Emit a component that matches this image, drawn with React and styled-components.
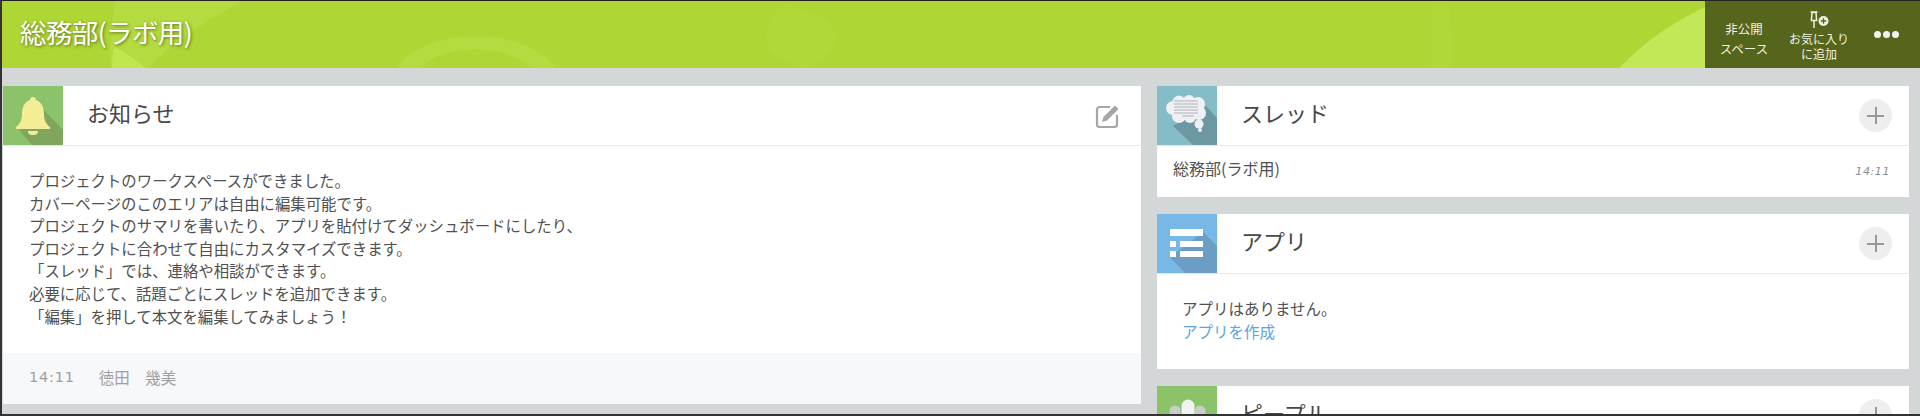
import React from "react";
import styled, { createGlobalStyle } from "styled-components";

const messageLines = [
  "プロジェクトのワークスペースができました。",
  "カバーページのこのエリアは自由に編集可能です。",
  "プロジェクトのサマリを書いたり、アプリを貼付けてダッシュボードにしたり、",
  "プロジェクトに合わせて自由にカスタマイズできます。",
  "「スレッド」では、連絡や相談ができます。",
  "必要に応じて、話題ごとにスレッドを追加できます。",
  "「編集」を押して本文を編集してみましょう！",
];

const GlobalStyle = createGlobalStyle`
  html, body {
    margin: 0;
    height: 100%;
    overflow: hidden;
    background: #d3d7d8;
  }
  body {
    font-family: "Noto Sans CJK JP", "Noto Sans", sans-serif;
    color: #444;
  }
`;

const Page = styled.div`
  height: 416px;
  box-sizing: border-box;
  border-top: 1px solid #222;
  border-left: 2px solid #333;
  border-bottom: 2px solid #333;
  overflow: hidden;
  display: flex;
  flex-direction: column;
`;

const Header = styled.header`
  position: relative;
  height: 67px;
  flex: none;
  display: flex;
  justify-content: space-between;
  background: #aed634;
  overflow: hidden;
`;

const Swirl = styled.svg`
  position: absolute;
  inset: 0;
  width: 100%;
  height: 100%;
`;

const Title = styled.h1`
  position: relative;
  margin: 0;
  padding-left: 18px;
  font-size: 26.5px;
  font-weight: 400;
  line-height: 62px;
  letter-spacing: -0.6px;
  color: #fff;
  text-shadow: 1px 1px 3px rgba(60, 70, 20, 0.7);
`;

const Actions = styled.div`
  position: relative;
  width: 215px;
  display: flex;
  background: #56651c;
  color: #eef0e0;
  text-align: center;
`;

const Action = styled.div`
  width: ${(p) => p.$width}px;
  box-sizing: border-box;
  padding-top: ${(p) => p.$top}px;
  font-size: ${(p) => p.$size}px;
  line-height: ${(p) => p.$leading}px;
  display: flex;
  flex-direction: column;
  align-items: center;
  justify-content: center;

  svg {
    margin-bottom: 3px;
  }
`;

const Dots = styled.div`
  flex: 1;
  display: flex;
  gap: 2px;
  align-items: center;
  justify-content: center;
  padding-right: 2px;

  i {
    width: 7px;
    height: 7px;
    border-radius: 50%;
    background: #f2f2f2;
  }
`;

const Main = styled.main`
  flex: 1;
  min-height: 0;
  display: flex;
  gap: 16px;
  padding: 18px 11px 0 1px;
  align-items: flex-start;
`;

const LeftColumn = styled.div`
  width: 1138px;
`;

const RightColumn = styled.div`
  flex: 1;
  display: flex;
  flex-direction: column;
  gap: 17px;
`;

const Panel = styled.section`
  background: #fff;
`;

const PanelHead = styled.div`
  height: 59px;
  display: flex;
  align-items: center;
  border-bottom: 1px solid #e4e8e9;
`;

const IconTile = styled.div`
  width: 60px;
  height: 59px;
  flex: none;
  background: ${(p) => p.$color};
  overflow: hidden;

  svg {
    display: block;
  }
`;

const PanelTitle = styled.h2`
  flex: 1;
  margin: 0;
  padding: 0 0 7px 24px;
  font-size: 22px;
  font-weight: 400;
  color: #484848;
`;

const EditButton = styled.div`
  margin-right: 19px;
  display: flex;
`;

const AddButton = styled.div`
  position: relative;
  width: 33px;
  height: 33px;
  margin-right: 17px;
  border-radius: 50%;
  background: #eeeeee;

  &::before, &::after {
    content: "";
    position: absolute;
    background: #999;
  }
  &::before {
    left: 8px;
    right: 8px;
    top: 16px;
    height: 1.5px;
  }
  &::after {
    top: 8px;
    bottom: 8px;
    left: 16px;
    width: 1.5px;
  }
`;

const MessageBody = styled.div`
  padding: 23px 26px 0;
  height: 207px;
  box-sizing: border-box;
  font-size: 15.4px;
  line-height: 22.6px;
  color: #505050;
`;

const MessageFooter = styled.div`
  height: 51px;
  box-sizing: border-box;
  padding: 0 0 4px 26px;
  display: flex;
  align-items: center;
  gap: 24px;
  background: #f6f8f9;
  color: #a0a0a0;
  font-size: 15.5px;
`;

const FooterTime = styled.span`
  font-family: "DejaVu Sans", sans-serif;
  font-size: 14.5px;
  letter-spacing: 0.8px;
`;

const ThreadRow = styled.div`
  height: 51px;
  display: flex;
  align-items: center;
  justify-content: space-between;
  padding: 0 19px 0 16px;
  font-size: 16px;
  color: #505050;
`;

const ThreadName = styled.span`
  margin-bottom: 7px;
`;

const ThreadTime = styled.span`
  font-family: "DejaVu Sans", sans-serif;
  font-size: 11px;
  font-style: italic;
  letter-spacing: 0.6px;
  color: #8d8d8d;
`;

const AppBody = styled.div`
  height: 95px;
  box-sizing: border-box;
  padding: 23px 25px 0;
  font-size: 15.5px;
  line-height: 22.5px;
  color: #505050;
`;

const AppLink = styled.a`
  display: block;
  color: #5aa5e2;
`;

const HeaderSwirl = () => (
  <Swirl viewBox="0 0 1920 67" preserveAspectRatio="none" fill="none">
    <path d="M108 67 C108 45 110 20 113 0 L240 0 C205 20 170 42 147 67Z" fill="#b4db3f" />
    <path d="M110 67 C110 58 111 52 112 46 C124 52 135 58 143 67Z" fill="#c0e650" />
    <path d="M395 67 C420 28 520 22 555 67 L530 67 C505 42 440 42 420 67Z" fill="#b4db40" />
    <path d="M765 36 C765 15 780 5 788 2 C800 10 835 15 835 36 C835 55 810 67 800 67 C785 60 765 55 765 36Z" fill="#b0d839" />
    <path d="M1431 67 L1452 67 C1452 40 1450 20 1448 0 L1431 0Z" fill="#b0d839" />
    <path d="M1619 67 C1640 45 1665 25 1705 6 L1710 67Z" fill="#c2e858" />
  </Swirl>
);

const BellIcon = () => (
  <svg width="60" height="59" viewBox="0 0 60 59">
    <path d="M38 21 L60 44 V59 H29 L16 44Z" fill="#7fa65c" />
    <path
      d="M30 11c-2 0-3 1-3 3c-6 2-8 8-8 14c0 7-3 11-6 13c-1 1 0 2 1 2h32c1 0 2-1 1-2c-3-2-6-6-6-13c0-6-2-12-8-14c0-2-1-3-3-3z"
      fill="#f3ed96"
    />
    <path d="M25 45h10c0 3-2 4-5 4s-5-1-5-4z" fill="#f3ed96" />
  </svg>
);

const ThreadIcon = () => (
  <svg width="60" height="59" viewBox="0 0 60 59">
    <path d="M49 20 L60 32 V59 H36 L16 40Z" fill="#6c98a3" />
    <g fill="#eef0f3">
      <circle cx="16" cy="22" r="7" />
      <circle cx="22" cy="16" r="6.5" />
      <circle cx="32" cy="15" r="6" />
      <circle cx="41" cy="18" r="7" />
      <circle cx="42" cy="27" r="7" />
      <circle cx="33" cy="31" r="6" />
      <circle cx="22" cy="30" r="7" />
      <rect x="18" y="15" width="24" height="18" />
      <circle cx="42" cy="38" r="4.5" />
      <circle cx="43" cy="44" r="2" />
    </g>
    <path d="M17 15h24M17 18h24M17 21h24M17 24h24M17 27h24M25 30h12" stroke="#aeb4ba" strokeWidth="1" />
  </svg>
);

const ListIcon = () => (
  <svg width="60" height="59" viewBox="0 0 60 59">
    <path d="M46 18 L60 32 V59 H28 L13 43Z" fill="#6b9ec4" />
    <g fill="#fff">
      <rect x="13" y="15" width="33" height="7" />
      <rect x="13" y="27" width="6" height="6" />
      <rect x="23" y="27" width="23" height="6" />
      <rect x="13" y="37" width="6" height="6" />
      <rect x="23" y="37" width="23" height="6" />
    </g>
  </svg>
);

const PeopleIcon = () => (
  <svg width="60" height="59" viewBox="0 0 60 59">
    <g fill="#c9cfc6">
      <circle cx="18" cy="25" r="5.5" />
      <circle cx="43" cy="25" r="5.5" />
      <rect x="12.5" y="25" width="11" height="20" rx="3" />
      <rect x="37.5" y="25" width="11" height="20" rx="3" />
    </g>
    <g fill="#f1f3f0">
      <circle cx="31" cy="20" r="6.5" />
      <rect x="24.5" y="20" width="13" height="26" rx="3" />
    </g>
  </svg>
);

const EditIcon = () => (
  <svg width="27" height="26" viewBox="0 0 27 26" fill="none">
    <path
      d="M15 4H4.5A2.5 2.5 0 0 0 2 6.5v15A2.5 2.5 0 0 0 4.5 24h15a2.5 2.5 0 0 0 2.5-2.5V12"
      stroke="#a6a6a6"
      strokeWidth="2.2"
    />
    <path d="M7 19l1.5-5L20 2.5l3.5 3.5L12 17.5z" fill="#a6a6a6" />
  </svg>
);

const PinIcon = () => (
  <svg width="22" height="18" viewBox="0 0 22 18" fill="none">
    <path d="M2.5 1h7M4 1.5h4l.6 8H3.4zM6 9v8" stroke="#eef0e0" strokeWidth="1.5" />
    <circle cx="15.500" cy="10" r="5" fill="#eef0e0" />
    <path d="M12.8 10h5.4M15.500 7.300v5.400" stroke="#56651c" strokeWidth="1.3" />
  </svg>
);

const App = () => {
  return (
    <>
      <GlobalStyle />
      <Page>
        <Header>
          <HeaderSwirl />
          <Title>総務部(ラボ用)</Title>
          <Actions>
            <Action $width={78} $top={8} $size={12.5} $leading={20}>
              <div>非公開</div>
              <div>スペース</div>
            </Action>
            <Action $width={72} $top={3} $size={12} $leading={14.5}>
              <PinIcon />
              <div>お気に入り</div>
              <div>に追加</div>
            </Action>
            <Dots>
              <i />
              <i />
              <i />
            </Dots>
          </Actions>
        </Header>
        <Main>
          <LeftColumn>
            <Panel>
              <PanelHead>
                <IconTile $color="#8cc26a">
                  <BellIcon />
                </IconTile>
                <PanelTitle>お知らせ</PanelTitle>
                <EditButton>
                  <EditIcon />
                </EditButton>
              </PanelHead>
              <MessageBody>
                {messageLines.map((line) => (
                  <div key={line}>{line}</div>
                ))}
              </MessageBody>
              <MessageFooter>
                <FooterTime>14:11</FooterTime>
                <span>徳田　幾美</span>
              </MessageFooter>
            </Panel>
          </LeftColumn>
          <RightColumn>
            <Panel>
              <PanelHead>
                <IconTile $color="#84bcc8">
                  <ThreadIcon />
                </IconTile>
                <PanelTitle>スレッド</PanelTitle>
                <AddButton />
              </PanelHead>
              <ThreadRow>
                <ThreadName>総務部(ラボ用)</ThreadName>
                <ThreadTime>14:11</ThreadTime>
              </ThreadRow>
            </Panel>
            <Panel>
              <PanelHead>
                <IconTile $color="#78b8e6">
                  <ListIcon />
                </IconTile>
                <PanelTitle>アプリ</PanelTitle>
                <AddButton />
              </PanelHead>
              <AppBody>
                <div>アプリはありません。</div>
                <AppLink>アプリを作成</AppLink>
              </AppBody>
            </Panel>
            <Panel>
              <PanelHead>
                <IconTile $color="#8cc26a">
                  <PeopleIcon />
                </IconTile>
                <PanelTitle>ピープル</PanelTitle>
                <AddButton />
              </PanelHead>
            </Panel>
          </RightColumn>
        </Main>
      </Page>
    </>
  );
};

export default App;
